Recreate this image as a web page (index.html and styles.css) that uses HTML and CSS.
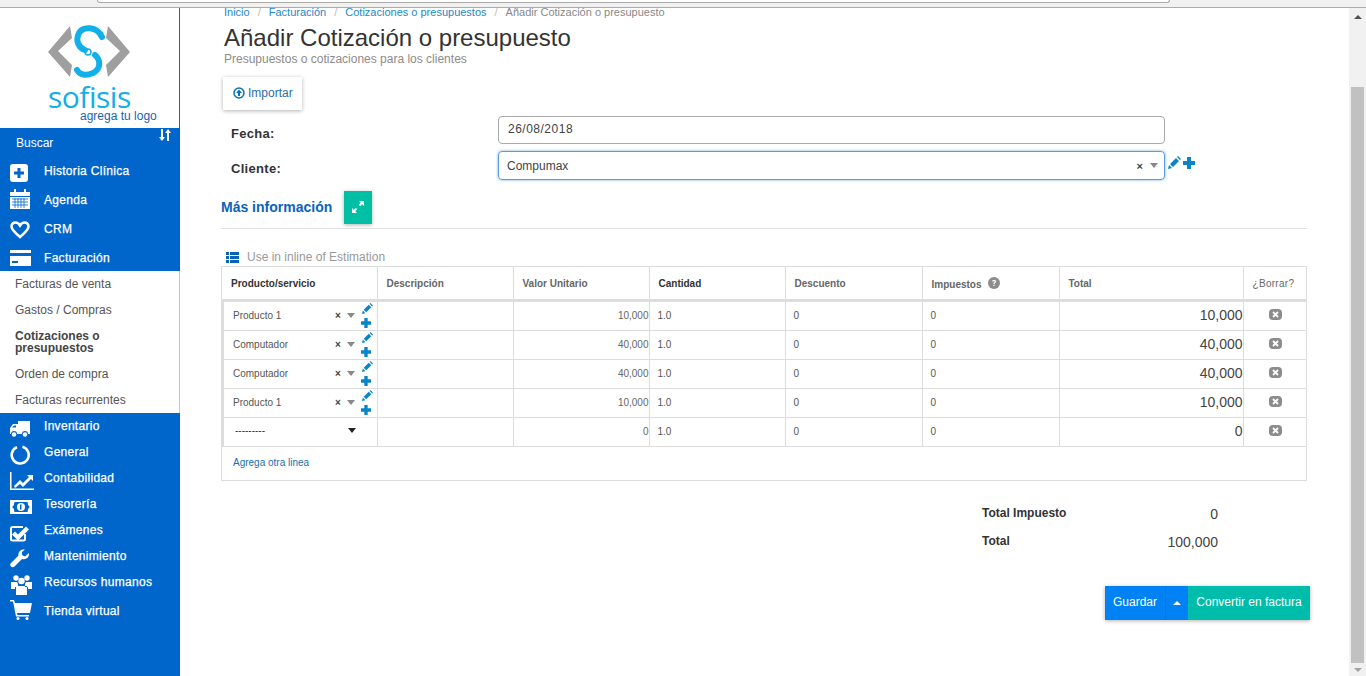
FILE: index.html
```html
<!DOCTYPE html>
<html lang="es">
<head>
    <meta charset="UTF-8">
    <title>Añadir Cotización o presupuesto</title>
    <link rel="stylesheet" href="styles.css">
</head>
<body>
    <div class="chrome"><div class="urlbox"></div></div>
    <div class="window">
        <aside class="sidebar">
            <div class="logo">
                <svg class="logo-mark" width="84" height="62" viewBox="0 0 84 62">
                    <path d="M23 2 L1 28 L23 53 L25 41 L11 27 L25 14 Z" fill="#9f9f9f"/>
                    <path d="M61 2 L83 28 L61 53 L59 41 L73 27 L59 14 Z" fill="#9f9f9f"/>
                    <path d="M55 13 C50 2 36 2 32 9 C28 17 32 24 38 26" fill="none" stroke="#12b0ea" stroke-width="6" stroke-linecap="round"/>
                    <path d="M48 31 C54 36 54 45 46 49 C39 52 33 51 30 46" fill="none" stroke="#12b0ea" stroke-width="6" stroke-linecap="round"/>
                    <circle cx="41" cy="28" r="3" fill="none" stroke="#12b0ea" stroke-width="1.500"/>
                </svg>
                <div class="logo-name">sofisis</div>
                <div class="logo-add">agrega tu logo</div>
            </div>
            <div class="menu">
                <div class="search">
                    <span>Buscar</span>
                    <svg class="sort" width="13" height="12" viewBox="0 0 13 12"><path d="M3 0h2v8h2L4 12 1 8h2zM9 12V4H7l3-4 3 4h-2v8z" fill="#fff"/></svg>
                </div>
                <a class="item icon-low">
                    <svg width="18" height="18" viewBox="0 0 18 18"><rect width="18" height="18" rx="3" fill="#fff"/><path d="M7.500 4h3v3.500h3.500v3h-3.500v3.500h-3v-3.500h-3.500v-3h3.500z" fill="#0066cc"/></svg>
                    <span>Historia Clínica</span>
                </a>
                <a class="item icon-high">
                    <svg width="20" height="20" viewBox="0 0 20 20"><path d="M0 3h4V0h2v3h8V0h2v3h4v4H0z" fill="#fff"/><path d="M0 8h20v12H0z" fill="#fff"/><path d="M2 10h16M2 13h16M2 16h16M5 9v10M8 9v10M11 9v10M14 9v10" stroke="#0066cc" stroke-width=".8"/></svg>
                    <span>Agenda</span>
                </a>
                <a class="item">
                    <svg width="20" height="18" viewBox="0 0 20 18"><path d="M10 16 C4 11 1.500 8.500 1.500 5.500 C1.500 3 3.500 1.500 5.500 1.500 C7.500 1.500 9 2.800 10 4.500 C11 2.800 12.500 1.500 14.500 1.500 C16.500 1.500 18.500 3 18.500 5.500 C18.500 8.500 16 11 10 16Z" fill="none" stroke="#fff" stroke-width="2.600"/></svg>
                    <span>CRM</span>
                </a>
                <a class="item last">
                    <svg width="21" height="16" viewBox="0 0 21 16"><path d="M0 0h21v3H0zM0 6h21v10H0z" fill="#fff"/><path d="M2 11h6v2H2z" fill="#0066cc"/></svg>
                    <span>Facturación</span>
                </a>
            </div>
            <nav class="submenu">
                <a>Facturas de venta</a>
                <a>Gastos / Compras</a>
                <a class="current">Cotizaciones o presupuestos</a>
                <a>Orden de compra</a>
                <a>Facturas recurrentes</a>
            </nav>
            <div class="menu lower">
                <a class="item">
                    <svg width="20" height="16" viewBox="0 0 20 16"><path d="M8 0h12v13h-2a3 3 0 0 0-6 0H7a3 3 0 0 0-6 0H0V7l3-4h5z" fill="#fff"/><path d="M2 6.500l2-2h2v2z" fill="#0066cc"/><circle cx="4" cy="13.500" r="2.200" fill="#fff"/><circle cx="15" cy="13.500" r="2.200" fill="#fff"/></svg>
                    <span>Inventario</span>
                </a>
                <a class="item">
                    <svg width="20" height="20" viewBox="0 0 20 20"><path d="M12.500 1.800 A8.500 8.500 0 1 1 7 2.100" fill="none" stroke="#fff" stroke-width="2.600"/></svg>
                    <span>General</span>
                </a>
                <a class="item">
                    <svg width="24" height="18" viewBox="0 0 24 18"><path d="M0 0h1.500v16.500H24V18H0z" fill="#fff"/><path d="M4 14l6-6 3 3 6-6-2-2h6v6l-2-2-8 8-3-3-5 4z" fill="#fff"/></svg>
                    <span>Contabilidad</span>
                </a>
                <a class="item">
                    <svg width="22" height="14" viewBox="0 0 22 14"><path d="M0 0h22v14H0z" fill="#fff"/><path d="M2 7c2-1 2-3 2.500-5h13c.5 2 .5 4 2.500 5-2 1-2 3-2.500 5h-13C4 10 4 8 2 7z" fill="#0066cc"/><circle cx="11" cy="7" r="4" fill="#fff"/><path d="M10 4.500h1.500v5h-1.500z" fill="#0066cc"/></svg>
                    <span>Tesorería</span>
                </a>
                <a class="item">
                    <svg width="20" height="18" viewBox="0 0 20 18"><path d="M15 10v5a1.500 1.500 0 0 1-1.500 1.500h-11A1.500 1.500 0 0 1 1 15V4.500A1.500 1.500 0 0 1 2.500 3H13" fill="none" stroke="#fff" stroke-width="2"/><path d="M5 7.500l3 3 8-8 3 3-11 11-6-6z" fill="#fff"/></svg>
                    <span>Exámenes</span>
                </a>
                <a class="item">
                    <svg width="20" height="20" viewBox="0 0 20 20"><path d="M19 4l-4 3.500-3-1.500 0-3 3-2.500C11 0 8 2.500 8.500 6.500L1 14c-1.500 1.500-.5 3 0 3.500s2 1.500 3.500 0L12 10c4 1 7.500-1.500 7-6z" fill="#fff"/></svg>
                    <span>Mantenimiento</span>
                </a>
                <a class="item">
                    <svg width="23" height="20" viewBox="0 0 23 20"><g fill="#fff"><circle cx="6" cy="3" r="2.700"/><circle cx="17" cy="3" r="2.700"/><circle cx="11.500" cy="6" r="3.200"/><path d="M1 7h6l1 2v3H5v2H1zM22 7h-6l-1 2v3h3v2h4zM6 11h11v9H6z"/></g></svg>
                    <span>Recursos humanos</span>
                </a>
                <a class="item shop">
                    <svg width="22" height="20" viewBox="0 0 22 20"><path d="M0 0h4l1 3h17l-2 10H7l.5 2H19v1.500H6L3 1.500H0z" fill="#fff"/><circle cx="8" cy="18.500" r="1.500" fill="#fff"/><circle cx="17" cy="18.500" r="1.500" fill="#fff"/></svg>
                    <span>Tienda virtual</span>
                </a>
            </div>
        </aside>

        <main class="content">
            <div class="breadcrumb">
                <a>Inicio</a><i>/</i><a>Facturación</a><i>/</i><a>Cotizaciones o presupuestos</a><i>/</i><span>Añadir Cotización o presupuesto</span>
            </div>
            <h1>Añadir Cotización o presupuesto</h1>
            <p class="subtitle">Presupuestos o cotizaciones para los clientes</p>
            <button class="import">
                <svg width="12" height="12" viewBox="0 0 12 12"><circle cx="6" cy="6" r="5" fill="none" stroke="#0a6fc2" stroke-width="1.500"/><path d="M6 2.500L9 6H7v3H5V6H3z" fill="#0a6fc2"/></svg>
                Importar
            </button>

            <div class="field date-row">
                <label>Fecha:</label>
                <div class="input">26/08/2018</div>
            </div>
            <div class="field client-row">
                <label>Cliente:</label>
                <div class="input focus">
                    <span>Compumax</span>
                    <span class="clear big">×</span>
                    <span class="caret"></span>
                </div>
                <div class="edit-icons">
                    <svg width="13" height="13" viewBox="0 0 13 13"><path d="M0 13l1-4 3 3zM2 8l6-6 3 3-6 6zM9 1l1-1 3 3-1 1z" fill="#0a84c9"/></svg>
                    <svg width="12" height="12" viewBox="0 0 12 12"><path d="M4 0h4v4h4v4H8v4H4V8H0V4h4z" fill="#0a84c9"/></svg>
                </div>
            </div>

            <div class="more">
                <h3>Más información</h3>
                <button class="expand">
                    <svg width="12" height="12" viewBox="0 0 12 12"><path d="M7 0h5v5l-1.800-1.800-2 2-1.400-1.400 2-2zM5 12H0V7l1.800 1.800 2-2 1.400 1.400-2 2z" fill="#fff"/></svg>
                </button>
            </div>

            <div class="inline-title">
                <svg width="13" height="11" viewBox="0 0 13 11"><path d="M0 0h3v3H0zM4 0h9v3H4zM0 4h3v3H0zM4 4h9v3H4zM0 8h3v3H0zM4 8h9v3H4z" fill="#0a62b8"/></svg>
                <span>Use in inline of Estimation</span>
            </div>

            <div class="table-box">
                <table>
                    <colgroup>
                        <col class="c-prod"><col class="c-desc"><col class="c-val"><col class="c-qty"><col class="c-disc"><col class="c-tax"><col class="c-total"><col class="c-del">
                    </colgroup>
                    <thead>
                        <tr>
                            <th class="dark">Producto/servicio</th>
                            <th>Descripción</th>
                            <th>Valor Unitario</th>
                            <th class="dark">Cantidad</th>
                            <th>Descuento</th>
                            <th>Impuestos <svg class="help" width="12" height="12" viewBox="0 0 12 12"><circle cx="6" cy="6" r="6" fill="#8c8c8c"/><path d="M3.800 4.500C4 2.500 8.200 2.500 8.200 4.500c0 1.500-1.600 1.300-1.600 2.500H5.300c0-2 1.600-1.700 1.600-2.500 0-.8-1.600-.8-1.800 0zM5.300 7.800h1.300v1.300H5.300z" fill="#fff"/></svg></th>
                            <th>Total</th>
                            <th class="normal">¿Borrar?</th>
                        </tr>
                    </thead>
                    <tbody>
                        <tr>
                            <td class="prod"><div class="picker"><span>Producto 1</span><span class="clear">×</span><span class="caret"></span><div class="mini"><svg width="11" height="11" viewBox="0 0 13 13"><path d="M0 13l1-4 3 3zM2 8l6-6 3 3-6 6zM9 1l1-1 3 3-1 1z" fill="#0a84c9"/></svg><svg width="10" height="10" viewBox="0 0 12 12"><path d="M4 0h4v4h4v4H8v4H4V8H0V4h4z" fill="#0a84c9"/></svg></div></div></td>
                            <td></td><td class="num">10,000</td><td>1.0</td><td>0</td><td>0</td><td class="sum">10,000</td>
                            <td class="del"><svg width="13" height="11" viewBox="0 0 13 11"><rect width="13" height="11" rx="4" fill="#8c8c8c"/><path d="M4 3l5 5M9 3l-5 5" stroke="#fff" stroke-width="1.800"/></svg></td>
                        </tr>
                        <tr>
                            <td class="prod"><div class="picker"><span>Computador</span><span class="clear">×</span><span class="caret"></span><div class="mini"><svg width="11" height="11" viewBox="0 0 13 13"><path d="M0 13l1-4 3 3zM2 8l6-6 3 3-6 6zM9 1l1-1 3 3-1 1z" fill="#0a84c9"/></svg><svg width="10" height="10" viewBox="0 0 12 12"><path d="M4 0h4v4h4v4H8v4H4V8H0V4h4z" fill="#0a84c9"/></svg></div></div></td>
                            <td></td><td class="num">40,000</td><td>1.0</td><td>0</td><td>0</td><td class="sum">40,000</td>
                            <td class="del"><svg width="13" height="11" viewBox="0 0 13 11"><rect width="13" height="11" rx="4" fill="#8c8c8c"/><path d="M4 3l5 5M9 3l-5 5" stroke="#fff" stroke-width="1.800"/></svg></td>
                        </tr>
                        <tr>
                            <td class="prod"><div class="picker"><span>Computador</span><span class="clear">×</span><span class="caret"></span><div class="mini"><svg width="11" height="11" viewBox="0 0 13 13"><path d="M0 13l1-4 3 3zM2 8l6-6 3 3-6 6zM9 1l1-1 3 3-1 1z" fill="#0a84c9"/></svg><svg width="10" height="10" viewBox="0 0 12 12"><path d="M4 0h4v4h4v4H8v4H4V8H0V4h4z" fill="#0a84c9"/></svg></div></div></td>
                            <td></td><td class="num">40,000</td><td>1.0</td><td>0</td><td>0</td><td class="sum">40,000</td>
                            <td class="del"><svg width="13" height="11" viewBox="0 0 13 11"><rect width="13" height="11" rx="4" fill="#8c8c8c"/><path d="M4 3l5 5M9 3l-5 5" stroke="#fff" stroke-width="1.800"/></svg></td>
                        </tr>
                        <tr>
                            <td class="prod"><div class="picker"><span>Producto 1</span><span class="clear">×</span><span class="caret"></span><div class="mini"><svg width="11" height="11" viewBox="0 0 13 13"><path d="M0 13l1-4 3 3zM2 8l6-6 3 3-6 6zM9 1l1-1 3 3-1 1z" fill="#0a84c9"/></svg><svg width="10" height="10" viewBox="0 0 12 12"><path d="M4 0h4v4h4v4H8v4H4V8H0V4h4z" fill="#0a84c9"/></svg></div></div></td>
                            <td></td><td class="num">10,000</td><td>1.0</td><td>0</td><td>0</td><td class="sum">10,000</td>
                            <td class="del"><svg width="13" height="11" viewBox="0 0 13 11"><rect width="13" height="11" rx="4" fill="#8c8c8c"/><path d="M4 3l5 5M9 3l-5 5" stroke="#fff" stroke-width="1.800"/></svg></td>
                        </tr>
                        <tr>
                            <td class="prod"><div class="picker empty"><span>---------</span><span class="caret dark"></span></div></td>
                            <td></td><td class="num">0</td><td>1.0</td><td>0</td><td>0</td><td class="sum">0</td>
                            <td class="del"><svg width="13" height="11" viewBox="0 0 13 11"><rect width="13" height="11" rx="4" fill="#8c8c8c"/><path d="M4 3l5 5M9 3l-5 5" stroke="#fff" stroke-width="1.800"/></svg></td>
                        </tr>
                    </tbody>
                </table>
                <a class="add-line">Agrega otra linea</a>
            </div>

            <div class="totals">
                <div class="total-row"><b>Total Impuesto</b><span>0</span></div>
                <div class="total-row"><b>Total</b><span>100,000</span></div>
            </div>

            <div class="actions">
                <button class="btn-save">Guardar</button>
                <button class="btn-drop"><span class="up"></span></button>
                <button class="btn-convert">Convertir en factura</button>
            </div>
        </main>

        <div class="scrollbar">
            <span class="arrow-up"></span>
            <div class="thumb"></div>
            <span class="arrow-down"></span>
        </div>
    </div>
</body>
</html>
```
FILE: styles.css
```css
* {
    box-sizing: border-box;
}
html, body {
    margin: 0;
    height: 676px;
    overflow: hidden;
}
body {
    font-family: "Liberation Sans", Arial, sans-serif;
    font-size: 12px;
    color: #333;
    background: #fff;
}
button {
    font-family: inherit;
    border: 0;
    cursor: pointer;
}

/* browser strip at the top */
.chrome {
    height: 8px;
    background: #f1f1f1;
    border-bottom: 1px solid #ababab;
}
.urlbox {
    margin-left: 97px;
    width: 1073px;
    height: 3px;
    background: #fff;
    border: 1px solid #a9a9a9;
    border-top: 0;
    border-radius: 0 0 3px 3px;
}
.window {
    display: flex;
    height: 668px;
}

/* sidebar */
.sidebar {
    width: 180px;
    flex: none;
    background: #0066cc;
    display: flex;
    flex-direction: column;
}
.logo {
    height: 120px;
    background: #fff;
    border-right: 1px solid #0b66c0;
    position: relative;
    padding: 16px 0 0 47px;
}
.logo-mark {
    display: block;
}
.logo-name {
    margin: 0 0 0 1px;
    font-family: "Open Sans", "Liberation Sans", sans-serif;
    font-size: 30px;
    line-height: 22px;
    color: #14aee8;
    letter-spacing: -.5px;
}
.logo-add {
    position: absolute;
    left: 80px;
    top: 101px;
    font-size: 12px;
    line-height: 14px;
    color: #1c63ad;
}
.search {
    height: 29px;
    padding: 7px 9px 0 16px;
    color: #fff;
    display: flex;
    justify-content: space-between;
    line-height: 16px;
}
.sort {
    margin-top: -6px;
}
.item {
    display: flex;
    align-items: center;
    height: 29px;
    color: #fff;
    letter-spacing: .3px;
    -webkit-text-stroke: .25px #fff;
    padding-left: 10px;
    position: relative;
}
.item span {
    position: absolute;
    left: 44px;
    top: 7px;
}
.item.last {
    height: 27px;
}
.item.icon-low {
    padding-top: 3px;
}
.item.icon-high {
    padding-bottom: 3px;
}
.lower .item {
    height: 26px;
    padding-top: 5px;
}
.lower .item span {
    top: 6px;
}
.lower .item.shop {
    height: 29px;
    padding-top: 0;
}
.lower .item.shop span {
    top: 9px;
}
.submenu {
    background: #fff;
    border-right: 1px solid #c9c9c9;
    height: 142px;
}
.submenu a {
    display: block;
    padding: 6px 15px;
    line-height: 14px;
    color: #555;
}
.submenu a.current {
    font-weight: bold;
    line-height: 12px;
    padding: 7px 0 7px 15px;
    width: 125px;
    color: #444;
}

/* main */
.content {
    flex: 1;
    min-width: 0;
    padding: 0 42px 0 41px;
}
.breadcrumb {
    margin: -1px 0 0 3px;
    font-size: 11px;
    line-height: 10px;
    color: #888;
    white-space: nowrap;
}
.breadcrumb a {
    color: #1e88c7;
}
.breadcrumb i {
    font-style: normal;
    color: #bbb;
    margin: 0 8px;
}
h1 {
    margin: 9px 0 0 3px;
    font-size: 24px;
    line-height: 24px;
    font-weight: normal;
    color: #333;
}
.subtitle {
    margin: 2px 0 0 3px;
    line-height: 14px;
    color: #8c8c8c;
}
.import {
    display: flex;
    align-items: center;
    gap: 3px;
    margin: 11px 0 0 2px;
    width: 79px;
    height: 33px;
    padding: 0 0 2px 10px;
    background: #fff;
    color: #2f6da8;
    font-size: 12px;
    box-shadow: 0 1px 4px rgba(0, 0, 0, .3);
}
.field {
    display: grid;
    grid-template-columns: 277px 667px auto;
    align-items: center;
}
.field label {
    font-weight: bold;
    font-size: 13px;
    letter-spacing: .3px;
    color: #333;
    padding: 6px 0 0 10px;
}
.date-row {
    margin-top: 6px;
}
.client-row {
    margin-top: 7px;
}
.input {
    height: 28px;
    border: 1px solid #aaa;
    border-radius: 4px;
    display: flex;
    align-items: center;
    padding: 0 0 2px 9px;
    font-size: 12px;
    letter-spacing: .5px;
    color: #444;
}
.input.focus {
    height: 29px;
    border-color: #5a9bdc;
    box-shadow: 0 0 3px #6ea8e0;
    padding: 0 6px 0 8px;
    letter-spacing: 0;
}
.input.focus span:first-child {
    flex: 1;
}
.clear {
    font-size: 10px;
    font-weight: bold;
    color: #444;
}
.clear.big {
    font-size: 11px;
    margin-right: 7px;
}
.caret {
    width: 0;
    height: 0;
    border: 4.500px solid transparent;
    border-top: 5px solid #888;
    border-bottom: 0;
}
.caret.dark {
    border-top-color: #222;
}
.edit-icons {
    display: flex;
    align-items: center;
    gap: 2px;
    padding: 0 0 6px 3px;
}
.more {
    display: flex;
    align-items: center;
    gap: 12px;
    margin-top: 10px;
    border-bottom: 1px solid #e3e3e3;
    padding-bottom: 4px;
    height: 39px;
}
.more h3 {
    margin: 0;
    font-size: 14px;
    color: #0b62bd;
}
.expand {
    width: 28px;
    height: 33px;
    background: #00bfa5;
    padding: 0;
    display: flex;
    align-items: center;
    justify-content: center;
    box-shadow: 0 1px 4px rgba(0, 0, 0, .3);
}
.inline-title {
    display: flex;
    align-items: center;
    gap: 8px;
    height: 14px;
    margin: 21px 0 2px 5px;
    color: #999;
}

/* table */
.table-box {
    width: 1086px;
    height: 215px;
    border: 1px solid #ddd;
}
table {
    width: 1085px;
    table-layout: fixed;
    border-collapse: collapse;
}
.c-prod { width: 154px; }
.c-desc { width: 136px; }
.c-val { width: 136px; }
.c-qty { width: 136px; }
.c-disc { width: 137px; }
.c-tax { width: 137px; }
.c-total { width: 184px; }
th {
    height: 33px;
    text-align: left;
    padding: 2px 9px 0;
    font-size: 10px;
    color: #666;
    border-left: 1px solid #ddd;
    border-bottom: 3px solid #ddd;
}
th:first-child, td:first-child {
    border-left: 0;
}
th:first-child {
    padding-left: 8px;
}
th.dark {
    color: #333;
}
th.normal {
    font-weight: normal;
    letter-spacing: .3px;
}
.help {
    vertical-align: -1px;
    margin-left: 4px;
}
td {
    height: 29px;
    padding: 0 8px;
    font-size: 10px;
    color: #555;
    border-left: 1px solid #ddd;
    border-bottom: 1px solid #ddd;
}
td.num {
    text-align: right;
    padding-right: 0;
    color: #666;
}
td.sum {
    text-align: right;
    padding: 0 0 2px;
    font-size: 14px;
    color: #444;
}
td.del {
    text-align: center;
    padding: 0;
}
td.del svg {
    display: block;
    margin: -2px auto 0;
}
td.prod {
    padding: 0 0 0 9px;
    border-left: 2px solid #ddd;
}
.picker {
    display: flex;
    align-items: center;
    height: 28px;
    position: relative;
}
.picker span:first-child {
    width: 102px;
}
.picker .clear {
    width: 12px;
}
.picker .caret {
    margin-right: 4px;
}
.picker.empty {
    padding-bottom: 2px;
}
.picker.empty span:first-child {
    width: 115px;
    padding-left: 2px;
    color: #333;
}
.mini {
    display: flex;
    flex-direction: column;
    align-items: flex-start;
    gap: 4px;
    margin-left: 2px;
}
.mini svg:first-child {
    margin-left: 1px;
}
.add-line {
    display: block;
    margin: 10px 0 0 11px;
    font-size: 10px;
    line-height: 12px;
    color: #1a6fae;
}

/* totals and buttons */
.totals {
    width: 236px;
    margin: 25px 0 0 761px;
}
.total-row {
    display: flex;
    justify-content: space-between;
    height: 28px;
    line-height: 14px;
}
.total-row b {
    color: #333;
}
.total-row span {
    margin-top: 1px;
    font-size: 14px;
    color: #444;
}
.actions {
    display: flex;
    margin: 24px 0 0 884px;
    width: 205px;
    height: 34px;
    box-shadow: 0 1px 4px rgba(0, 0, 0, .3);
}
.actions button {
    color: #fff;
    font-size: 12px;
    padding: 0 0 2px;
    height: 34px;
}
.btn-save {
    width: 60px;
    background: #0082f4;
}
.actions .btn-drop {
    width: 23px;
    background: #0082f4;
    border-left: 1px solid #0a76d8;
    padding-bottom: 5px;
}
.up {
    display: inline-block;
    width: 0;
    height: 0;
    border: 4px solid transparent;
    border-bottom: 4px solid #fff;
    border-top: 0;
}
.btn-convert {
    width: 122px;
    background: #00bcaa;
}

/* page scrollbar */
.scrollbar {
    width: 17px;
    flex: none;
    background: #f1f1f1;
    display: flex;
    flex-direction: column;
    align-items: center;
    padding: 7px 0 4px;
}
.arrow-up {
    border: 4px solid transparent;
    border-bottom: 4px solid #505050;
    border-top: 0;
}
.thumb {
    flex: 1;
    width: 13px;
    margin: 68px 0 5px;
    background: #c1c1c1;
}
.arrow-down {
    border: 4px solid transparent;
    border-top: 4px solid #a3a3a3;
    border-bottom: 0;
}
```
